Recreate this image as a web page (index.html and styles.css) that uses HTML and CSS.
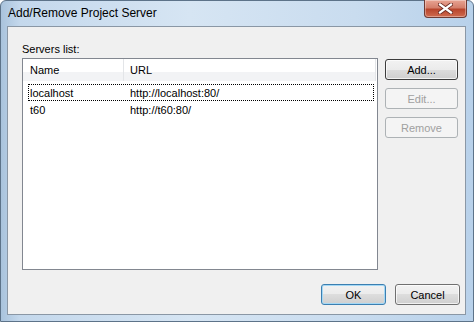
FILE: index.html
```html
<!DOCTYPE html>
<html lang="en">

<head>
    <meta charset="UTF-8">
    <title>Add/Remove Project Server</title>
    <link rel="stylesheet" href="styles.css">
</head>

<body>
    <div class="window">
        <div class="titlebar">
            <span class="title">Add/Remove Project Server</span>
            <div class="close-btn">
                <svg width="15" height="11" viewBox="0 0 15 11">
                    <path d="M2 1.5 L13 9.5 M13 1.5 L2 9.5" stroke="#6b2a22" stroke-width="4" stroke-linecap="square"/>
                    <path d="M2 1.5 L13 9.5 M13 1.5 L2 9.5" stroke="#ffffff" stroke-width="2.2" stroke-linecap="square"/>
                </svg>
            </div>
        </div>
        <div class="client">
            <div class="label">Servers list:</div>
            <div class="main-row">
                <div class="list-view">
                    <div class="list-header">
                        <div class="col col-name">Name</div>
                        <div class="col col-url">URL</div>
                    </div>
                    <div class="rows">
                        <div class="row focused">
                            <span class="cell-name">localhost</span>
                            <span class="cell-url">http://localhost:80/</span>
                        </div>
                        <div class="row">
                            <span class="cell-name">t60</span>
                            <span class="cell-url">http://t60:80/</span>
                        </div>
                    </div>
                </div>
                <div class="side-buttons">
                    <button class="btn btn-hot">Add...</button>
                    <button class="btn" disabled>Edit...</button>
                    <button class="btn" disabled>Remove</button>
                </div>
            </div>
            <div class="footer">
                <button class="btn btn-default">OK</button>
                <button class="btn">Cancel</button>
            </div>
        </div>
    </div>
</body>

</html>
```

FILE: styles.css
```css
body {
    margin: 0;
    font-family: "Liberation Sans", Arial, sans-serif;
    font-size: 11px;
    color: #000;
}

.window {
    width: 474px;
    height: 322px;
    box-sizing: border-box;
    display: flex;
    flex-direction: column;
    border: 1px solid #5d7389;
    border-radius: 6px 6px 0 0;
    background: linear-gradient(90deg, #a9c3dc 0%, #c4d8ec 4%, #d6e5f3 40%, #c9dcef 75%, #b8d1ea 100%);
}

.titlebar {
    height: 25px;
    display: flex;
    justify-content: space-between;
    align-items: flex-start;
    padding-left: 7px;
}

.title {
    font-family: "Liberation Sans", Arial, sans-serif;
    font-size: 12px;
    line-height: 15px;
    margin-top: 5px;
    color: #000;
}

.close-btn {
    width: 41px;
    height: 17px;
    margin-right: 6px;
    margin-top: -1px;
    display: flex;
    align-items: center;
    justify-content: center;
    border: 1px solid #6e3a33;
    border-top: none;
    border-radius: 0 0 4px 4px;
    background: linear-gradient(#e8a493 0%, #d47f6b 45%, #b8452c 55%, #cf6b4f 100%);
    box-shadow: inset 0 0 0 1px rgba(255, 255, 255, 0.35);
}

.client {
    flex: 1;
    margin: 0 7px 6px 6px;
    border: 1px solid #8a97a5;
    background-color: #f0f0f0;
    padding: 16px 5px 0 14px;
    display: flex;
    flex-direction: column;
}

.label {
    line-height: 13px;
    margin-bottom: 2px;
}

.main-row {
    display: flex;
    gap: 7px;
    margin-right: 2px;
}

.list-view {
    width: 354px;
    height: 210px;
    border: 1px solid #828790;
    background-color: #fff;
}

.list-header {
    display: flex;
    height: 22px;
    width: 353px;
    background: linear-gradient(#ffffff 0%, #ffffff 60%, #f2f3f5 60%, #f2f3f5 100%);
}

.col {
    line-height: 22px;
    border-right: 1px solid #e3e5e8;
    box-sizing: border-box;
}

.col-name {
    width: 101px;
    padding-left: 7px;
}

.col-url {
    flex: 1;
    padding-left: 6px;
}

.rows {
    padding-top: 3px;
}

.row {
    display: flex;
    height: 17px;
    line-height: 16px;
    margin: 0 3px 0 5px;
    padding-left: 1px;
    border: 1px solid transparent;
    box-sizing: border-box;
}

.row.focused {
    border: 1px dotted #000;
}

.cell-name {
    width: 100px;
}

.side-buttons {
    display: flex;
    flex-direction: column;
    gap: 8px;
    margin-top: 1px;
}

.btn {
    font-family: "Liberation Sans", Arial, sans-serif;
    font-size: 11px;
    color: #000;
    width: 73px;
    height: 21px;
    padding: 0;
    border: 1px solid #707070;
    border-radius: 3px;
    background: linear-gradient(#f2f2f2 0%, #ebebeb 50%, #dddddd 50%, #cfcfcf 100%);
    box-shadow: inset 0 0 0 1px rgba(255, 255, 255, 0.7);
}

.btn-hot {
    border-color: #3c3c3c;
}

.btn:disabled {
    color: #a0a0a0;
    border-color: #adb2b5;
    background: #f4f4f4;
    box-shadow: none;
}

.btn-default {
    border-color: #3c7fb1;
    box-shadow: inset 0 0 0 1px #a4d8f5;
}

.footer {
    display: flex;
    justify-content: flex-end;
    gap: 9px;
    margin-top: 14px;
}

.footer .btn {
    width: 65px;
}
```
